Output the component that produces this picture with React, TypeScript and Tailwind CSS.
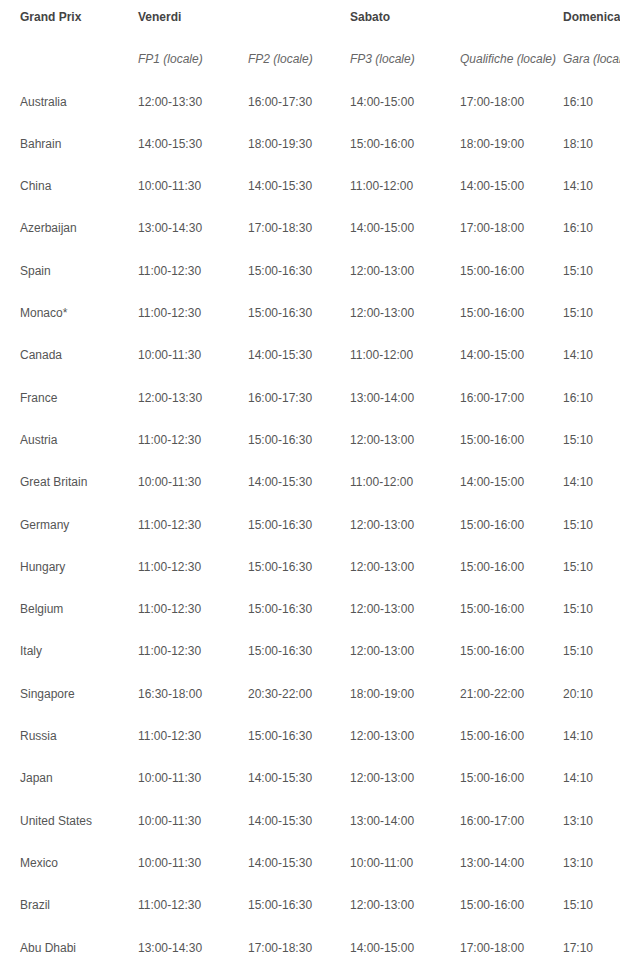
const rows: [string, string, string, string, string, string][] = [
  ['Australia', '12:00-13:30', '16:00-17:30', '14:00-15:00', '17:00-18:00', '16:10'],
  ['Bahrain', '14:00-15:30', '18:00-19:30', '15:00-16:00', '18:00-19:00', '18:10'],
  ['China', '10:00-11:30', '14:00-15:30', '11:00-12:00', '14:00-15:00', '14:10'],
  ['Azerbaijan', '13:00-14:30', '17:00-18:30', '14:00-15:00', '17:00-18:00', '16:10'],
  ['Spain', '11:00-12:30', '15:00-16:30', '12:00-13:00', '15:00-16:00', '15:10'],
  ['Monaco*', '11:00-12:30', '15:00-16:30', '12:00-13:00', '15:00-16:00', '15:10'],
  ['Canada', '10:00-11:30', '14:00-15:30', '11:00-12:00', '14:00-15:00', '14:10'],
  ['France', '12:00-13:30', '16:00-17:30', '13:00-14:00', '16:00-17:00', '16:10'],
  ['Austria', '11:00-12:30', '15:00-16:30', '12:00-13:00', '15:00-16:00', '15:10'],
  ['Great Britain', '10:00-11:30', '14:00-15:30', '11:00-12:00', '14:00-15:00', '14:10'],
  ['Germany', '11:00-12:30', '15:00-16:30', '12:00-13:00', '15:00-16:00', '15:10'],
  ['Hungary', '11:00-12:30', '15:00-16:30', '12:00-13:00', '15:00-16:00', '15:10'],
  ['Belgium', '11:00-12:30', '15:00-16:30', '12:00-13:00', '15:00-16:00', '15:10'],
  ['Italy', '11:00-12:30', '15:00-16:30', '12:00-13:00', '15:00-16:00', '15:10'],
  ['Singapore', '16:30-18:00', '20:30-22:00', '18:00-19:00', '21:00-22:00', '20:10'],
  ['Russia', '11:00-12:30', '15:00-16:30', '12:00-13:00', '15:00-16:00', '14:10'],
  ['Japan', '10:00-11:30', '14:00-15:30', '12:00-13:00', '15:00-16:00', '14:10'],
  ['United States', '10:00-11:30', '14:00-15:30', '13:00-14:00', '16:00-17:00', '13:10'],
  ['Mexico', '10:00-11:30', '14:00-15:30', '10:00-11:00', '13:00-14:00', '13:10'],
  ['Brazil', '11:00-12:30', '15:00-16:30', '12:00-13:00', '15:00-16:00', '15:10'],
  ['Abu Dhabi', '13:00-14:30', '17:00-18:30', '14:00-15:00', '17:00-18:00', '17:10'],
]

// column grid: 20 | 118 | 110 | 102 | 110 | 103 | ...
const grid = 'grid grid-cols-[118px_110px_102px_110px_103px_80px] h-[42.3px] pt-[10px] leading-[14px] whitespace-nowrap'

export default function App() {
  return (
    <div className="w-[620px] h-[973px] overflow-hidden bg-white text-[12px] text-[#555] font-['Liberation_Sans',Arial,sans-serif]">
      <div className="pl-5 w-[700px]">
        <div className={`${grid} font-bold text-[#444]`}>
          <div>Grand Prix</div>
          <div>Venerdi</div>
          <div />
          <div>Sabato</div>
          <div />
          <div>Domenica</div>
        </div>
        <div className={`${grid} italic text-[#666]`}>
          <div />
          <div>FP1 (locale)</div>
          <div>FP2 (locale)</div>
          <div>FP3 (locale)</div>
          <div>Qualifiche (locale)</div>
          <div>Gara (locale)</div>
        </div>
        {rows.map((r) => (
          <div key={r[0]} className={grid}>
            {r.map((c, i) => (
              <div key={i}>{c}</div>
            ))}
          </div>
        ))}
      </div>
    </div>
  )
}
